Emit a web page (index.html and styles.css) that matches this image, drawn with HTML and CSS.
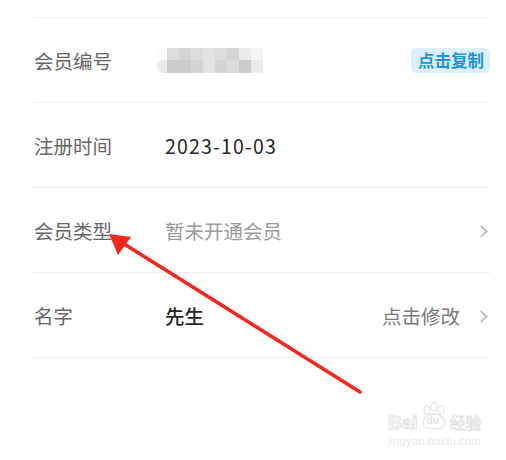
FILE: index.html
```html
<!DOCTYPE html>
<html lang="zh-CN">
<head>
<meta charset="utf-8">
<link rel="stylesheet" href="styles.css">
</head>
<body>
<div class="page">
  <div class="list">
    <div class="row">
      <div class="label">会员编号</div>
      <div class="value">
        <div class="mosaic">
          <span class="c0"></span><span class="c3"></span><span class="c2"></span><span class="c3"></span><span class="c4"></span><span class="c3"></span><span class="c2"></span><span class="c5"></span><span class="c6"></span>
          <span class="c5"></span><span class="c1"></span><span class="c1"></span><span class="c2"></span><span class="c4"></span><span class="c2"></span><span class="c3"></span><span class="c1"></span><span class="c5"></span>
        </div>
      </div>
      <div class="copy">点击复制</div>
    </div>
    <div class="row">
      <div class="label">注册时间</div>
      <div class="value dark date">2023-10-03</div>
    </div>
    <div class="row">
      <div class="label">会员类型</div>
      <div class="value muted">暂未开通会员</div>
      <span class="chev"></span>
    </div>
    <div class="row">
      <div class="label">名字</div>
      <div class="value dark strong">先生</div>
      <div class="action">点击修改</div>
      <span class="chev"></span>
    </div>
  </div>

  <svg class="arrow" width="506" height="460" viewBox="0 0 506 460">
    <line x1="360" y1="392" x2="121" y2="242" stroke="#f5261b" stroke-width="3.6" stroke-linecap="round"/>
    <polygon points="109,234 131,237 118,255" fill="#f5261b"/>
  </svg>

  <div class="watermark">
    <div class="wm-top">
      <span class="wm-bai">Bai</span>
      <span class="wm-paw">
        <svg width="30" height="30" viewBox="0 0 30 30">
          <ellipse cx="8" cy="8" rx="3" ry="4" fill="none" stroke="#e6e6e6" stroke-width="1.3"/>
          <ellipse cx="15" cy="5" rx="3" ry="4" fill="none" stroke="#e6e6e6" stroke-width="1.3"/>
          <ellipse cx="22" cy="8" rx="3" ry="4" fill="none" stroke="#e6e6e6" stroke-width="1.3"/>
          <path d="M4 20 Q6 12 15 12 Q24 12 26 20 Q26 27 15 27 Q4 27 4 20 Z" fill="none" stroke="#e6e6e6" stroke-width="1.3"/>
        </svg>
        <span class="wm-du">du</span>
      </span>
      <span class="wm-jy">经验</span>
    </div>
    <div class="wm-url">jingyan.baidu.com</div>
  </div>
</div>
</body>
</html>
```
FILE: styles.css
```css
* { box-sizing: border-box; }
html, body {
  margin: 0;
  padding: 0;
  background: #fff;
}
body {
  font-family: "Noto Sans CJK SC", "Noto Sans", sans-serif;
}
.page {
  position: relative;
  width: 506px;
  height: 460px;
  overflow: hidden;
}
.list {
  padding: 17px 16px 0 33px;
}
.row {
  display: flex;
  align-items: center;
  height: 85px;
  border-top: 1px solid #eeeeee;
}
.row:last-child {
  border-bottom: 1px solid #eeeeee;
  height: 86px;
}
.label {
  width: 132px;
  flex: none;
  font-size: 19.5px;
  color: #666;
  padding-left: 1px;
}
.value {
  flex: 1;
  font-size: 19.5px;
  color: #999;
}
.value.dark { color: #262626; }
.value.date { letter-spacing: 1.2px; }
.value.strong { font-weight: 500; }
.value.muted { color: #9a9a9a; }
.mosaic {
  display: grid;
  grid-template-columns: 10px repeat(8, 12px);
  grid-template-rows: 12px 13px;
  width: 106px;
  margin-left: -8px;
  margin-top: 1px;
}
.mosaic span { display: block; }
.mosaic .c0 { background: #fbfbfb; }
.mosaic .c1 { background: #cbcbcb; }
.mosaic .c2 { background: #d4d4d4; }
.mosaic .c3 { background: #dcdcdc; }
.mosaic .c4 { background: #e2e2e2; }
.mosaic .c5 { background: #ebebeb; }
.mosaic .c6 { background: #f4f4f4; }
.mosaic span:nth-child(10) { border-radius: 6px 0 0 6px; }
.copy {
  flex: none;
  background: #dcf0fc;
  color: #1b94df;
  font-weight: 700;
  font-size: 16.5px;
  line-height: 25px;
  padding: 0 6px 0 7px;
  border-radius: 5px;
  margin-top: 1px;
}
.action {
  flex: none;
  font-size: 19.5px;
  color: #7a7a7a;
  margin-right: 17px;
}
.chev {
  flex: none;
  width: 9px;
  height: 9px;
  border-top: 2px solid #c0c0c0;
  border-right: 2px solid #c0c0c0;
  transform: rotate(45deg);
  margin-right: 4px;
  margin-top: 2px;
}
.arrow {
  position: absolute;
  left: 0;
  top: 0;
}
.watermark {
  position: absolute;
  left: 388px;
  top: 403px;
  color: #e6e6e6;
  font-family: "Liberation Sans", sans-serif;
}
.wm-top {
  display: flex;
  align-items: flex-end;
  height: 29px;
}
.wm-bai {
  font-size: 19px;
  font-weight: 700;
  color: #fff;
  -webkit-text-stroke: 1px #e2e2e2;
  line-height: 19px;
}
.wm-paw {
  position: relative;
  width: 30px;
  height: 30px;
  margin-left: 1px;
}
.wm-paw svg { display: block; }
.wm-du {
  position: absolute;
  left: 8px;
  top: 14px;
  font-size: 10px;
  font-weight: 700;
  line-height: 10px;
  color: #e2e2e2;
}
.wm-jy {
  font-family: "Noto Sans CJK SC", sans-serif;
  font-size: 16px;
  line-height: 19px;
  color: #fff;
  -webkit-text-stroke: 0.8px #e2e2e2;
  margin-left: 1px;
}
.wm-url {
  font-size: 11.5px;
  color: #e9e9e9;
  margin-top: 3px;
}
```
